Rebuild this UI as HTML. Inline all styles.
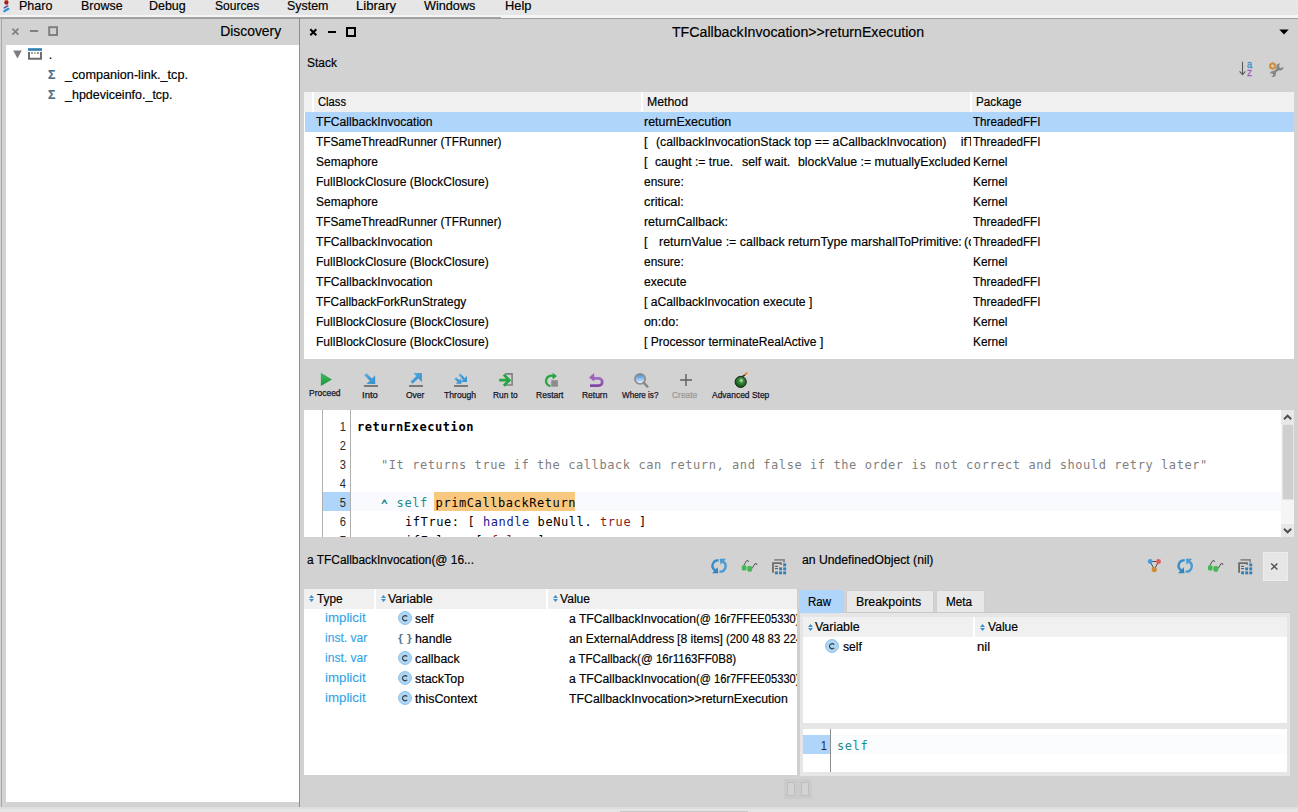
<!DOCTYPE html>
<html><head><meta charset="utf-8"><title>Pharo</title>
<style>
html,body{margin:0;padding:0;}
body{width:1298px;height:812px;overflow:hidden;background:#d2d2d2;position:relative;font-family:'Liberation Sans',sans-serif;font-size:12.5px;color:#000;}
div,span,svg{box-sizing:border-box;}
svg{position:absolute;overflow:visible;}
</style></head><body>
<div style="position:absolute;left:0px;top:0px;width:1298px;height:15px;background:#e6e6e6;"></div><div style="position:absolute;left:0px;top:15px;width:1298px;height:3px;background:#f5f5f5;"></div><div style="position:absolute;left:0px;top:17px;width:501px;height:1px;background:#a4a4a4;"></div><span style="position:absolute;left:18.7px;transform-origin:left center;top:-2.5044999999999993px;line-height:16px;white-space:pre;font-family:'Liberation Sans',sans-serif;font-size:13px;font-weight:normal;color:#000;-webkit-text-stroke:0.18px;transform:scaleX(0.9624);">Pharo</span><span style="position:absolute;left:80.60000000000001px;transform-origin:left center;top:-2.5044999999999993px;line-height:16px;white-space:pre;font-family:'Liberation Sans',sans-serif;font-size:13px;font-weight:normal;color:#000;-webkit-text-stroke:0.18px;transform:scaleX(0.9594);">Browse</span><span style="position:absolute;left:149.39999999999998px;transform-origin:left center;top:-2.5044999999999993px;line-height:16px;white-space:pre;font-family:'Liberation Sans',sans-serif;font-size:13px;font-weight:normal;color:#000;-webkit-text-stroke:0.18px;transform:scaleX(0.9579);">Debug</span><span style="position:absolute;left:214.5px;transform-origin:left center;top:-2.5044999999999993px;line-height:16px;white-space:pre;font-family:'Liberation Sans',sans-serif;font-size:13px;font-weight:normal;color:#000;-webkit-text-stroke:0.18px;transform:scaleX(0.9287);">Sources</span><span style="position:absolute;left:287.2px;transform-origin:left center;top:-2.5044999999999993px;line-height:16px;white-space:pre;font-family:'Liberation Sans',sans-serif;font-size:13px;font-weight:normal;color:#000;-webkit-text-stroke:0.18px;transform:scaleX(0.9552);">System</span><span style="position:absolute;left:356.2px;transform-origin:left center;top:-2.5044999999999993px;line-height:16px;white-space:pre;font-family:'Liberation Sans',sans-serif;font-size:13px;font-weight:normal;color:#000;-webkit-text-stroke:0.18px;transform:scaleX(1.0088);">Library</span><span style="position:absolute;left:424.0px;transform-origin:left center;top:-2.5044999999999993px;line-height:16px;white-space:pre;font-family:'Liberation Sans',sans-serif;font-size:13px;font-weight:normal;color:#000;-webkit-text-stroke:0.18px;transform:scaleX(0.9744);">Windows</span><span style="position:absolute;left:504.5px;transform-origin:left center;top:-2.5044999999999993px;line-height:16px;white-space:pre;font-family:'Liberation Sans',sans-serif;font-size:13px;font-weight:normal;color:#000;-webkit-text-stroke:0.18px;transform:scaleX(0.9869);">Help</span><svg style="left:0px;top:0px" width="14" height="14" viewBox="0 0 14 14"><ellipse cx="6.4" cy="2.4" rx="2.1" ry="2.4" fill="#a51c1c"/><path d="M5.6 0h1.6v1h-1.6z" fill="#e87060"/><path d="M4.4 7.8L7.7 5.9" stroke="#5c5c9c" stroke-width="1.6" stroke-linecap="round"/><path d="M4.3 11.1L8.4 8.8" stroke="#2a90d8" stroke-width="2.2" stroke-linecap="round"/></svg><div style="position:absolute;left:0px;top:18px;width:1298px;height:1px;background:#9e9e9e;"></div><div style="position:absolute;left:1px;top:18px;width:1px;height:789px;background:#a8a8a8;"></div><div style="position:absolute;left:6px;top:45px;width:293px;height:757px;background:#fff;"></div><span style="position:absolute;right:1017.3px;transform-origin:right center;top:20.69855px;line-height:20px;white-space:pre;font-family:'Liberation Sans',sans-serif;font-size:15.3px;font-weight:normal;color:#000;-webkit-text-stroke:0.18px;transform:scaleX(0.9083);">Discovery</span><svg style="left:10px;top:24px" width="60" height="14" viewBox="0 0 60 14"><g stroke="#808080" fill="none"><path d="M2.4 4.6l6 6M8.4 4.6l-6 6" stroke-width="1.7"/><path d="M20 7h8.2" stroke-width="2"/><rect x="39.2" y="3.2" width="7.8" height="7.8" stroke-width="2"/></g></svg><svg style="left:13px;top:50px" width="9" height="9"><path d="M0.2 0.5h8.6l-4.3 8z" fill="#7c7c7c"/></svg><svg style="left:28px;top:48px" width="14" height="12"><rect x="0" y="0.2" width="14" height="2.6" fill="#2f7fb5"/><path d="M1 4v6.8h12V4" fill="none" stroke="#6e6e6e" stroke-width="2"/><rect x="3.2" y="4.3" width="1.6" height="1.5" fill="#2f7fb5"/><rect x="6.1" y="4.3" width="1.7" height="1.5" fill="#d08a30"/><rect x="9" y="4.3" width="1.8" height="1.5" fill="#606060"/></svg><span style="position:absolute;left:48.8px;transform-origin:left center;top:46.66875px;line-height:16px;white-space:pre;font-family:'Liberation Sans',sans-serif;font-size:12.5px;font-weight:normal;color:#000;-webkit-text-stroke:0.18px;">.</span><span style="position:absolute;left:47.6px;transform-origin:left center;top:66.66875px;line-height:16px;white-space:pre;font-family:'Liberation Sans',sans-serif;font-size:12.5px;font-weight:bold;color:#4a6f8a;-webkit-text-stroke:0.18px;transform:scaleX(0.9846);">Σ</span><span style="position:absolute;left:65.2px;transform-origin:left center;top:66.66875px;line-height:16px;white-space:pre;font-family:'Liberation Sans',sans-serif;font-size:12.5px;font-weight:normal;color:#000;-webkit-text-stroke:0.18px;transform:scaleX(1.0114);">_companion-link._tcp.</span><span style="position:absolute;left:47.6px;transform-origin:left center;top:86.66875px;line-height:16px;white-space:pre;font-family:'Liberation Sans',sans-serif;font-size:12.5px;font-weight:bold;color:#4a6f8a;-webkit-text-stroke:0.18px;transform:scaleX(0.9846);">Σ</span><span style="position:absolute;left:65.2px;transform-origin:left center;top:86.66875px;line-height:16px;white-space:pre;font-family:'Liberation Sans',sans-serif;font-size:12.5px;font-weight:normal;color:#000;-webkit-text-stroke:0.18px;transform:scaleX(0.9980);">_hpdeviceinfo._tcp.</span><div style="position:absolute;left:299px;top:18px;width:1px;height:789px;background:#8f8f8f;"></div><svg style="left:308px;top:26px" width="60" height="14" viewBox="0 0 60 14"><g stroke="#000" stroke-width="2" fill="none"><path d="M2.3 3.3l6 6M8.3 3.3l-6 6"/><path d="M20 6h8"/><rect x="39" y="2" width="8" height="8"/></g></svg><span style="position:absolute;left:662.05px;transform-origin:center center;top:21.69855px;line-height:20px;white-space:pre;font-family:'Liberation Sans',sans-serif;font-size:15.3px;font-weight:normal;color:#000;-webkit-text-stroke:0.18px;transform:scaleX(0.9269);">TFCallbackInvocation&gt;&gt;returnExecution</span><svg style="left:1279px;top:29px" width="10" height="6"><path d="M0.3 0.5h9.4l-4.7 5z" fill="#000"/></svg><span style="position:absolute;left:307px;transform-origin:left center;top:54.66875px;line-height:16px;white-space:pre;font-family:'Liberation Sans',sans-serif;font-size:12.5px;font-weight:normal;color:#000;-webkit-text-stroke:0.18px;transform:scaleX(0.9595);">Stack</span><svg style="left:1239px;top:61px" width="14" height="16"><path d="M3.5 0.8v12.6M0.6 10.4l2.9 3.2l2.9-3.2" fill="none" stroke="#5a5a5a" stroke-width="1.1"/></svg><span style="position:absolute;left:1246.7px;transform-origin:left center;top:58.0px;line-height:12px;white-space:pre;font-family:'Liberation Sans',sans-serif;font-size:10.5px;font-weight:normal;color:#3a8fc0;transform:scaleX(0.8898);-webkit-text-stroke:0.3px #3a8fc0;">a</span><span style="position:absolute;left:1246.9px;transform-origin:left center;top:66.3px;line-height:12px;white-space:pre;font-family:'Liberation Sans',sans-serif;font-size:10.5px;font-weight:normal;color:#9a5fc0;transform:scaleX(0.9524);-webkit-text-stroke:0.3px #9a5fc0;">z</span><svg style="left:1268px;top:61px" width="17" height="17" viewBox="0 0 17 17"><path d="M5.2 12.6l5-5" stroke="#868686" stroke-width="2.6"/><path d="M12.2 2.6a3.5 3.5 0 1 0 3.2 3.2l-2.3 1.5l-1.9-1.1l0.1-2.2z" fill="#868686"/><path d="M3.2 15.4a3 3 0 1 0-1.2-2.6l2-0.6l1.3 1.2l-0.6 1.6z" fill="#868686"/><path d="M4.6 1l3.5 2v4l-3.5 2l-3.5-2v-4z" fill="#cb8f45"/><circle cx="4.6" cy="5" r="1.5" fill="#e6cfae"/></svg><div style="position:absolute;left:304px;top:92px;width:990px;height:267px;background:#fff;"></div><div style="position:absolute;left:304px;top:92px;width:8px;height:20px;background:#f0f0f0;"></div><div style="position:absolute;left:314px;top:92px;width:327px;height:20px;background:#f0f0f0;"></div><div style="position:absolute;left:643px;top:92px;width:327px;height:20px;background:#f0f0f0;"></div><div style="position:absolute;left:972px;top:92px;width:322px;height:20px;background:#f0f0f0;"></div><span style="position:absolute;left:318.2px;transform-origin:left center;top:93.66875px;line-height:16px;white-space:pre;font-family:'Liberation Sans',sans-serif;font-size:12.5px;font-weight:normal;color:#000;-webkit-text-stroke:0.18px;transform:scaleX(0.8956);">Class</span><span style="position:absolute;left:647px;transform-origin:left center;top:93.66875px;line-height:16px;white-space:pre;font-family:'Liberation Sans',sans-serif;font-size:12.5px;font-weight:normal;color:#000;-webkit-text-stroke:0.18px;transform:scaleX(0.9831);">Method</span><span style="position:absolute;left:976px;transform-origin:left center;top:93.66875px;line-height:16px;white-space:pre;font-family:'Liberation Sans',sans-serif;font-size:12.5px;font-weight:normal;color:#000;-webkit-text-stroke:0.18px;transform:scaleX(0.9372);">Package</span><div style="position:absolute;left:305px;top:112px;width:989px;height:20px;background:#afd5fa;"></div><span style="position:absolute;left:315.8px;transform-origin:left center;top:113.66875px;line-height:16px;white-space:pre;font-family:'Liberation Sans',sans-serif;font-size:12.5px;font-weight:normal;color:#000;-webkit-text-stroke:0.18px;transform:scaleX(0.9700);">TFCallbackInvocation</span><div style="position:absolute;left:643px;top:112px;width:327.5px;height:20px;overflow:hidden"><span style="position:absolute;left:0.9px;transform-origin:left center;top:1.6687499999999993px;line-height:16px;white-space:pre;font-family:'Liberation Sans',sans-serif;font-size:12.5px;font-weight:normal;color:#000;-webkit-text-stroke:0.18px;transform:scaleX(0.9970);">returnExecution</span></div><span style="position:absolute;left:973.3px;transform-origin:left center;top:113.66875px;line-height:16px;white-space:pre;font-family:'Liberation Sans',sans-serif;font-size:12.5px;font-weight:normal;color:#000;-webkit-text-stroke:0.18px;transform:scaleX(0.9327);">ThreadedFFI</span><span style="position:absolute;left:315.8px;transform-origin:left center;top:133.66875px;line-height:16px;white-space:pre;font-family:'Liberation Sans',sans-serif;font-size:12.5px;font-weight:normal;color:#000;-webkit-text-stroke:0.18px;transform:scaleX(0.9435);">TFSameThreadRunner (TFRunner)</span><div style="position:absolute;left:643px;top:132px;width:327.5px;height:20px;overflow:hidden"><span style="position:absolute;left:1px;transform-origin:left center;top:1.6687499999999993px;line-height:16px;white-space:pre;font-family:'Liberation Sans',sans-serif;font-size:12.5px;font-weight:normal;color:#000;-webkit-text-stroke:0.18px;">[</span><span style="position:absolute;left:13.100000000000023px;transform-origin:left center;top:1.6687499999999993px;line-height:16px;white-space:pre;font-family:'Liberation Sans',sans-serif;font-size:12.5px;font-weight:normal;color:#000;-webkit-text-stroke:0.18px;transform:scaleX(0.9811);">(callbackInvocationStack top == aCallbackInvocation)</span><span style="position:absolute;left:317.79999999999995px;transform-origin:left center;top:1.6687499999999993px;line-height:16px;white-space:pre;font-family:'Liberation Sans',sans-serif;font-size:12.5px;font-weight:normal;color:#000;-webkit-text-stroke:0.18px;">ifTrue: [</span></div><span style="position:absolute;left:973.3px;transform-origin:left center;top:133.66875px;line-height:16px;white-space:pre;font-family:'Liberation Sans',sans-serif;font-size:12.5px;font-weight:normal;color:#000;-webkit-text-stroke:0.18px;transform:scaleX(0.9327);">ThreadedFFI</span><span style="position:absolute;left:315.8px;transform-origin:left center;top:153.66875px;line-height:16px;white-space:pre;font-family:'Liberation Sans',sans-serif;font-size:12.5px;font-weight:normal;color:#000;-webkit-text-stroke:0.18px;transform:scaleX(0.9594);">Semaphore</span><div style="position:absolute;left:643px;top:152px;width:327.5px;height:20px;overflow:hidden"><span style="position:absolute;left:1px;transform-origin:left center;top:1.6687499999999993px;line-height:16px;white-space:pre;font-family:'Liberation Sans',sans-serif;font-size:12.5px;font-weight:normal;color:#000;-webkit-text-stroke:0.18px;">[</span><span style="position:absolute;left:12.399999999999977px;transform-origin:left center;top:1.6687499999999993px;line-height:16px;white-space:pre;font-family:'Liberation Sans',sans-serif;font-size:12.5px;font-weight:normal;color:#000;-webkit-text-stroke:0.18px;transform:scaleX(0.9743);">caught := true.</span><span style="position:absolute;left:98.60000000000002px;transform-origin:left center;top:1.6687499999999993px;line-height:16px;white-space:pre;font-family:'Liberation Sans',sans-serif;font-size:12.5px;font-weight:normal;color:#000;-webkit-text-stroke:0.18px;transform:scaleX(0.9930);">self wait.</span><span style="position:absolute;left:154.70000000000005px;transform-origin:left center;top:1.6687499999999993px;line-height:16px;white-space:pre;font-family:'Liberation Sans',sans-serif;font-size:12.5px;font-weight:normal;color:#000;-webkit-text-stroke:0.18px;transform:scaleX(0.9817);">blockValue := mutuallyExcludedBlock value</span></div><span style="position:absolute;left:973.3px;transform-origin:left center;top:153.66875px;line-height:16px;white-space:pre;font-family:'Liberation Sans',sans-serif;font-size:12.5px;font-weight:normal;color:#000;-webkit-text-stroke:0.18px;transform:scaleX(0.9518);">Kernel</span><span style="position:absolute;left:315.8px;transform-origin:left center;top:173.66875px;line-height:16px;white-space:pre;font-family:'Liberation Sans',sans-serif;font-size:12.5px;font-weight:normal;color:#000;-webkit-text-stroke:0.18px;transform:scaleX(0.9642);">FullBlockClosure (BlockClosure)</span><div style="position:absolute;left:643px;top:172px;width:327.5px;height:20px;overflow:hidden"><span style="position:absolute;left:0.9px;transform-origin:left center;top:1.6687499999999993px;line-height:16px;white-space:pre;font-family:'Liberation Sans',sans-serif;font-size:12.5px;font-weight:normal;color:#000;-webkit-text-stroke:0.18px;transform:scaleX(0.9544);">ensure:</span></div><span style="position:absolute;left:973.3px;transform-origin:left center;top:173.66875px;line-height:16px;white-space:pre;font-family:'Liberation Sans',sans-serif;font-size:12.5px;font-weight:normal;color:#000;-webkit-text-stroke:0.18px;transform:scaleX(0.9518);">Kernel</span><span style="position:absolute;left:315.8px;transform-origin:left center;top:193.66875px;line-height:16px;white-space:pre;font-family:'Liberation Sans',sans-serif;font-size:12.5px;font-weight:normal;color:#000;-webkit-text-stroke:0.18px;transform:scaleX(0.9594);">Semaphore</span><div style="position:absolute;left:643px;top:192px;width:327.5px;height:20px;overflow:hidden"><span style="position:absolute;left:0.9px;transform-origin:left center;top:1.6687499999999993px;line-height:16px;white-space:pre;font-family:'Liberation Sans',sans-serif;font-size:12.5px;font-weight:normal;color:#000;-webkit-text-stroke:0.18px;transform:scaleX(1.0230);">critical:</span></div><span style="position:absolute;left:973.3px;transform-origin:left center;top:193.66875px;line-height:16px;white-space:pre;font-family:'Liberation Sans',sans-serif;font-size:12.5px;font-weight:normal;color:#000;-webkit-text-stroke:0.18px;transform:scaleX(0.9518);">Kernel</span><span style="position:absolute;left:315.8px;transform-origin:left center;top:213.66875px;line-height:16px;white-space:pre;font-family:'Liberation Sans',sans-serif;font-size:12.5px;font-weight:normal;color:#000;-webkit-text-stroke:0.18px;transform:scaleX(0.9435);">TFSameThreadRunner (TFRunner)</span><div style="position:absolute;left:643px;top:212px;width:327.5px;height:20px;overflow:hidden"><span style="position:absolute;left:0.9px;transform-origin:left center;top:1.6687499999999993px;line-height:16px;white-space:pre;font-family:'Liberation Sans',sans-serif;font-size:12.5px;font-weight:normal;color:#000;-webkit-text-stroke:0.18px;">returnCallback:</span></div><span style="position:absolute;left:973.3px;transform-origin:left center;top:213.66875px;line-height:16px;white-space:pre;font-family:'Liberation Sans',sans-serif;font-size:12.5px;font-weight:normal;color:#000;-webkit-text-stroke:0.18px;transform:scaleX(0.9327);">ThreadedFFI</span><span style="position:absolute;left:315.8px;transform-origin:left center;top:233.66875px;line-height:16px;white-space:pre;font-family:'Liberation Sans',sans-serif;font-size:12.5px;font-weight:normal;color:#000;-webkit-text-stroke:0.18px;transform:scaleX(0.9700);">TFCallbackInvocation</span><div style="position:absolute;left:643px;top:232px;width:327.5px;height:20px;overflow:hidden"><span style="position:absolute;left:1px;transform-origin:left center;top:1.6687499999999993px;line-height:16px;white-space:pre;font-family:'Liberation Sans',sans-serif;font-size:12.5px;font-weight:normal;color:#000;-webkit-text-stroke:0.18px;">[</span><span style="position:absolute;left:15.600000000000023px;transform-origin:left center;top:1.6687499999999993px;line-height:16px;white-space:pre;font-family:'Liberation Sans',sans-serif;font-size:12.5px;font-weight:normal;color:#000;-webkit-text-stroke:0.18px;transform:scaleX(0.9924);">returnValue := callback returnType marshallToPrimitive:</span><span style="position:absolute;left:321.1px;transform-origin:left center;top:1.6687499999999993px;line-height:16px;white-space:pre;font-family:'Liberation Sans',sans-serif;font-size:12.5px;font-weight:normal;color:#000;-webkit-text-stroke:0.18px;">(callback</span></div><span style="position:absolute;left:973.3px;transform-origin:left center;top:233.66875px;line-height:16px;white-space:pre;font-family:'Liberation Sans',sans-serif;font-size:12.5px;font-weight:normal;color:#000;-webkit-text-stroke:0.18px;transform:scaleX(0.9327);">ThreadedFFI</span><span style="position:absolute;left:315.8px;transform-origin:left center;top:253.66875px;line-height:16px;white-space:pre;font-family:'Liberation Sans',sans-serif;font-size:12.5px;font-weight:normal;color:#000;-webkit-text-stroke:0.18px;transform:scaleX(0.9642);">FullBlockClosure (BlockClosure)</span><div style="position:absolute;left:643px;top:252px;width:327.5px;height:20px;overflow:hidden"><span style="position:absolute;left:0.9px;transform-origin:left center;top:1.6687499999999993px;line-height:16px;white-space:pre;font-family:'Liberation Sans',sans-serif;font-size:12.5px;font-weight:normal;color:#000;-webkit-text-stroke:0.18px;transform:scaleX(0.9544);">ensure:</span></div><span style="position:absolute;left:973.3px;transform-origin:left center;top:253.66875px;line-height:16px;white-space:pre;font-family:'Liberation Sans',sans-serif;font-size:12.5px;font-weight:normal;color:#000;-webkit-text-stroke:0.18px;transform:scaleX(0.9518);">Kernel</span><span style="position:absolute;left:315.8px;transform-origin:left center;top:273.66875px;line-height:16px;white-space:pre;font-family:'Liberation Sans',sans-serif;font-size:12.5px;font-weight:normal;color:#000;-webkit-text-stroke:0.18px;transform:scaleX(0.9700);">TFCallbackInvocation</span><div style="position:absolute;left:643px;top:272px;width:327.5px;height:20px;overflow:hidden"><span style="position:absolute;left:0.9px;transform-origin:left center;top:1.6687499999999993px;line-height:16px;white-space:pre;font-family:'Liberation Sans',sans-serif;font-size:12.5px;font-weight:normal;color:#000;-webkit-text-stroke:0.18px;transform:scaleX(0.9685);">execute</span></div><span style="position:absolute;left:973.3px;transform-origin:left center;top:273.66875px;line-height:16px;white-space:pre;font-family:'Liberation Sans',sans-serif;font-size:12.5px;font-weight:normal;color:#000;-webkit-text-stroke:0.18px;transform:scaleX(0.9327);">ThreadedFFI</span><span style="position:absolute;left:315.8px;transform-origin:left center;top:293.66875px;line-height:16px;white-space:pre;font-family:'Liberation Sans',sans-serif;font-size:12.5px;font-weight:normal;color:#000;-webkit-text-stroke:0.18px;transform:scaleX(0.9531);">TFCallbackForkRunStrategy</span><div style="position:absolute;left:643px;top:292px;width:327.5px;height:20px;overflow:hidden"><span style="position:absolute;left:0.9px;transform-origin:left center;top:1.6687499999999993px;line-height:16px;white-space:pre;font-family:'Liberation Sans',sans-serif;font-size:12.5px;font-weight:normal;color:#000;-webkit-text-stroke:0.18px;transform:scaleX(0.9732);">[ aCallbackInvocation execute ]</span></div><span style="position:absolute;left:973.3px;transform-origin:left center;top:293.66875px;line-height:16px;white-space:pre;font-family:'Liberation Sans',sans-serif;font-size:12.5px;font-weight:normal;color:#000;-webkit-text-stroke:0.18px;transform:scaleX(0.9327);">ThreadedFFI</span><span style="position:absolute;left:315.8px;transform-origin:left center;top:313.66875px;line-height:16px;white-space:pre;font-family:'Liberation Sans',sans-serif;font-size:12.5px;font-weight:normal;color:#000;-webkit-text-stroke:0.18px;transform:scaleX(0.9642);">FullBlockClosure (BlockClosure)</span><div style="position:absolute;left:643px;top:312px;width:327.5px;height:20px;overflow:hidden"><span style="position:absolute;left:0.9px;transform-origin:left center;top:1.6687499999999993px;line-height:16px;white-space:pre;font-family:'Liberation Sans',sans-serif;font-size:12.5px;font-weight:normal;color:#000;-webkit-text-stroke:0.18px;">on:do:</span></div><span style="position:absolute;left:973.3px;transform-origin:left center;top:313.66875px;line-height:16px;white-space:pre;font-family:'Liberation Sans',sans-serif;font-size:12.5px;font-weight:normal;color:#000;-webkit-text-stroke:0.18px;transform:scaleX(0.9518);">Kernel</span><span style="position:absolute;left:315.8px;transform-origin:left center;top:333.66875px;line-height:16px;white-space:pre;font-family:'Liberation Sans',sans-serif;font-size:12.5px;font-weight:normal;color:#000;-webkit-text-stroke:0.18px;transform:scaleX(0.9642);">FullBlockClosure (BlockClosure)</span><div style="position:absolute;left:643px;top:332px;width:327.5px;height:20px;overflow:hidden"><span style="position:absolute;left:0.9px;transform-origin:left center;top:1.6687499999999993px;line-height:16px;white-space:pre;font-family:'Liberation Sans',sans-serif;font-size:12.5px;font-weight:normal;color:#000;-webkit-text-stroke:0.18px;transform:scaleX(0.9666);">[ Processor terminateRealActive ]</span></div><span style="position:absolute;left:973.3px;transform-origin:left center;top:333.66875px;line-height:16px;white-space:pre;font-family:'Liberation Sans',sans-serif;font-size:12.5px;font-weight:normal;color:#000;-webkit-text-stroke:0.18px;transform:scaleX(0.9518);">Kernel</span><span style="position:absolute;left:308.8px;transform-origin:left center;top:387.3815px;line-height:12px;white-space:pre;font-family:'Liberation Sans',sans-serif;font-size:9px;font-weight:normal;color:#15152a;transform:scaleX(0.9424);-webkit-text-stroke:0.25px currentColor;">Proceed</span><span style="position:absolute;left:361.8px;transform-origin:left center;top:389.3815px;line-height:12px;white-space:pre;font-family:'Liberation Sans',sans-serif;font-size:9px;font-weight:normal;color:#15152a;transform:scaleX(1.0522);-webkit-text-stroke:0.25px currentColor;">Into</span><span style="position:absolute;left:405.8px;transform-origin:left center;top:389.3815px;line-height:12px;white-space:pre;font-family:'Liberation Sans',sans-serif;font-size:9px;font-weight:normal;color:#15152a;transform:scaleX(0.9428);-webkit-text-stroke:0.25px currentColor;">Over</span><span style="position:absolute;left:444.20000000000005px;transform-origin:left center;top:389.3815px;line-height:12px;white-space:pre;font-family:'Liberation Sans',sans-serif;font-size:9px;font-weight:normal;color:#15152a;transform:scaleX(0.9573);-webkit-text-stroke:0.25px currentColor;">Through</span><span style="position:absolute;left:492.90000000000003px;transform-origin:left center;top:389.3815px;line-height:12px;white-space:pre;font-family:'Liberation Sans',sans-serif;font-size:9px;font-weight:normal;color:#15152a;transform:scaleX(0.9347);-webkit-text-stroke:0.25px currentColor;">Run to</span><span style="position:absolute;left:536.0px;transform-origin:left center;top:389.3815px;line-height:12px;white-space:pre;font-family:'Liberation Sans',sans-serif;font-size:9px;font-weight:normal;color:#15152a;transform:scaleX(0.9478);-webkit-text-stroke:0.25px currentColor;">Restart</span><span style="position:absolute;left:582.1px;transform-origin:left center;top:389.3815px;line-height:12px;white-space:pre;font-family:'Liberation Sans',sans-serif;font-size:9px;font-weight:normal;color:#15152a;transform:scaleX(0.9402);-webkit-text-stroke:0.25px currentColor;">Return</span><span style="position:absolute;left:621.8000000000001px;transform-origin:left center;top:389.3815px;line-height:12px;white-space:pre;font-family:'Liberation Sans',sans-serif;font-size:9px;font-weight:normal;color:#15152a;transform:scaleX(0.8984);-webkit-text-stroke:0.25px currentColor;">Where is?</span><span style="position:absolute;left:671.8000000000001px;transform-origin:left center;top:389.3815px;line-height:12px;white-space:pre;font-family:'Liberation Sans',sans-serif;font-size:9px;font-weight:normal;color:#9a9a9a;transform:scaleX(0.9365);-webkit-text-stroke:0.25px currentColor;">Create</span><span style="position:absolute;left:711.5px;transform-origin:left center;top:389.3815px;line-height:12px;white-space:pre;font-family:'Liberation Sans',sans-serif;font-size:9px;font-weight:normal;color:#15152a;transform:scaleX(0.9386);-webkit-text-stroke:0.25px currentColor;">Advanced Step</span><svg style="left:0;top:0" width="1298" height="812" viewBox="0 0 1298 812"><defs><linearGradient id="gG" x1="0" y1="0" x2="0" y2="1"><stop offset="0" stop-color="#3dba5e"/><stop offset="1" stop-color="#1f9639"/></linearGradient><linearGradient id="gB" x1="0" y1="0" x2="1" y2="1"><stop offset="0" stop-color="#5aaee0"/><stop offset="1" stop-color="#2f8ccc"/></linearGradient><linearGradient id="gM" x1="0" y1="0" x2="0" y2="1"><stop offset="0" stop-color="#3a8fd6"/><stop offset="1" stop-color="#e8f2fa"/></linearGradient><radialGradient id="gBomb" cx="0.55" cy="0.38" r="0.6"><stop offset="0" stop-color="#d8ecd8"/><stop offset="0.35" stop-color="#3d8a3d"/><stop offset="1" stop-color="#0f4f12"/></radialGradient><linearGradient id="gP" x1="0" y1="0" x2="0" y2="1"><stop offset="0" stop-color="#a06cc0"/><stop offset="1" stop-color="#8445a8"/></linearGradient></defs><path d="M320.9 372.8L332 379.4L320.9 386z" fill="url(#gG)"/><path d="M365.3 374.3L371.24 380.04" stroke="url(#gB)" stroke-width="2.9" fill="none"/><path d="M375.2 375.2L375.2 384L366.4 384z" fill="url(#gB)"/><rect x="363.9" y="385" width="14.1" height="2" fill="#7a7a7a"/><path d="M411.6 382.6L418.2 376.4" stroke="url(#gB)" stroke-width="2.9" fill="none"/><path d="M413.3 373.1L421.9 373.1L421.9 381.9z" fill="url(#gB)"/><rect x="409" y="385" width="14" height="2" fill="#7a7a7a"/><path d="M459.6 374.2L464.21 379.21" stroke="url(#gB)" stroke-width="2.4" fill="none"/><path d="M467 375.8L467 382L460.8 382z" fill="url(#gB)"/><path d="M455.2 378.2L458.78000000000003 381.28000000000003" stroke="url(#gB)" stroke-width="2.4" fill="none"/><path d="M461.3 378.2L461.3 383.8L455.7 383.8z" fill="url(#gB)"/><rect x="454" y="385" width="14" height="2" fill="#7a7a7a"/><path d="M505.2 373.9H512.1V385H505.2" fill="none" stroke="#808080" stroke-width="1.6"/><path d="M499.2 380.2H508.6M503.8 374.6L509.4 380.2L503.8 385.8" fill="none" stroke="#27a545" stroke-width="2.7" stroke-linejoin="miter"/><path d="M553.6 376.2A5.3 5.3 0 1 0 550.4 386.2" fill="none" stroke="#27a545" stroke-width="2.3"/><path d="M552.6 372.8L557 376L552.6 379.4z" fill="#27a545"/><rect x="551.2" y="380.2" width="6.7" height="6.5" fill="#8c8c8c"/><path d="M593.5 378.3H598.6A3.6 3.6 0 0 1 598.6 385.6H590" fill="none" stroke="url(#gP)" stroke-width="2.7"/><path d="M589 377.4L594.2 373.1V381.6z" fill="#9a62bc"/><circle cx="640.1" cy="378.9" r="4.4" fill="url(#gM)"/><circle cx="640.1" cy="378.9" r="5.1" fill="none" stroke="#8a8a8a" stroke-width="1.7"/><path d="M643.9 382.9L647.4 386.6" stroke="#8a8a8a" stroke-width="2.6" stroke-linecap="round"/><path d="M680.1 380H692M686 374V386" stroke="#5e5e5e" stroke-width="1.4" fill="none"/><circle cx="740.7" cy="381.9" r="5.6" fill="url(#gBomb)" stroke="#0a1a0a" stroke-width="0.9"/><path d="M742.4 376.6L745 374.8" stroke="#3a2a1a" stroke-width="1.6"/><path d="M744.6 374.9L747.3 372.6" stroke="#e8761a" stroke-width="1.5"/><path d="M746 371.6l1.2 1.4l1 -1.2" stroke="#f0b070" stroke-width="0.6" fill="none"/></svg><svg style="left:0;top:0" width="1298" height="812" viewBox="0 0 1298 812"><g fill="none" stroke-width="2.4"><path d="M718.65 560.4499999999999A5.35 5.35 0 0 0 715.15 570.35" stroke="#3b8dc8"/><path d="M719.4499999999999 571.5500000000001A5.35 5.35 0 0 0 722.9499999999999 561.65" stroke="#4a9bd4"/></g><path d="M712.0 573.1999999999999L718.3 573.1999999999999L717.6 567.1999999999999z" fill="#3383bd"/><path d="M726.1 558.8L719.8 558.8L720.5 564.8z" fill="#4a9bd4"/><g fill="none" stroke="#454545" stroke-width="0.9"><path d="M743.8 565.4L746.4 560.9Q748.0999999999999 559.4 748.6999999999999 562.0"/><path d="M752.1999999999999 568.4L754.8 563.8Q756.5 562.4 757.0 565.0"/></g><rect x="741.8" y="565.1999999999999" width="4.7" height="5.4" rx="1.6" fill="#44b854"/><rect x="747.3" y="566.0" width="4.8" height="5.7" rx="1.6" fill="#44b854"/><path d="M774.3000000000001 559.9H784.0V562.4" fill="none" stroke="#8a8a8a" stroke-width="1.8"/><path d="M773.0 572.8V563.1999999999999H780.9V564.8" fill="none" stroke="#6c6c6c" stroke-width="1.8"/><path d="M775.0 566.3h2.9M775.0 568.5999999999999h2.9" stroke="#3a3a3a" stroke-width="0.9"/><rect x="783.2" y="563.4" width="2.9" height="2.9" fill="#2f80b8"/><rect x="779.1" y="567.4" width="2.9" height="2.9" fill="#2f80b8"/><rect x="783.2" y="567.4" width="2.9" height="2.9" fill="#2f80b8"/><rect x="775.0" y="571.4" width="2.9" height="2.9" fill="#2f80b8"/><rect x="779.1" y="571.4" width="2.9" height="2.9" fill="#2f80b8"/><rect x="783.2" y="571.4" width="2.9" height="2.9" fill="#2f80b8"/><g fill="none" stroke-width="2.4"><path d="M1184.75 560.4499999999999A5.35 5.35 0 0 0 1181.25 570.35" stroke="#3b8dc8"/><path d="M1185.5500000000002 571.5500000000001A5.35 5.35 0 0 0 1189.0500000000002 561.65" stroke="#4a9bd4"/></g><path d="M1178.1 573.1999999999999L1184.4 573.1999999999999L1183.7 567.1999999999999z" fill="#3383bd"/><path d="M1192.2 558.8L1185.9 558.8L1186.6 564.8z" fill="#4a9bd4"/><g fill="none" stroke="#454545" stroke-width="0.9"><path d="M1209.9 565.4L1212.5 560.9Q1214.2 559.4 1214.8000000000002 562.0"/><path d="M1218.3000000000002 568.4L1220.9 563.8Q1222.6000000000001 562.4 1223.1000000000001 565.0"/></g><rect x="1207.9" y="565.1999999999999" width="4.7" height="5.4" rx="1.6" fill="#44b854"/><rect x="1213.4" y="566.0" width="4.8" height="5.7" rx="1.6" fill="#44b854"/><path d="M1240.4 559.9H1250.1000000000001V562.4" fill="none" stroke="#8a8a8a" stroke-width="1.8"/><path d="M1239.1000000000001 572.8V563.1999999999999H1247.0V564.8" fill="none" stroke="#6c6c6c" stroke-width="1.8"/><path d="M1241.1000000000001 566.3h2.9M1241.1000000000001 568.5999999999999h2.9" stroke="#3a3a3a" stroke-width="0.9"/><rect x="1249.3" y="563.4" width="2.9" height="2.9" fill="#2f80b8"/><rect x="1245.2" y="567.4" width="2.9" height="2.9" fill="#2f80b8"/><rect x="1249.3" y="567.4" width="2.9" height="2.9" fill="#2f80b8"/><rect x="1241.1000000000001" y="571.4" width="2.9" height="2.9" fill="#2f80b8"/><rect x="1245.2" y="571.4" width="2.9" height="2.9" fill="#2f80b8"/><rect x="1249.3" y="571.4" width="2.9" height="2.9" fill="#2f80b8"/><path d="M1150.2 561.5H1158.5L1154.3 569.6z" fill="none" stroke="#3a3a3a" stroke-width="0.9"/><circle cx="1150.2" cy="561.5" r="2.4" fill="#4a9ad8"/><circle cx="1158.5" cy="561.5" r="2.4" fill="#e05a5a"/><circle cx="1154.3" cy="569.6" r="2.6" fill="#d08a3a"/></svg><div style="position:absolute;left:304px;top:410px;width:990px;height:127px;background:#fff;"></div><div style="position:absolute;left:322px;top:410px;width:1px;height:127px;background:#b0b0b0;"></div><div style="position:absolute;left:350px;top:410px;width:1px;height:127px;background:#b0b0b0;"></div><div style="position:absolute;left:323px;top:492px;width:27px;height:19px;background:#afd5fa;"></div><div style="position:absolute;left:351px;top:492px;width:930px;height:19px;background:#f8fafd;"></div><div style="position:absolute;left:1281px;top:410px;width:13px;height:127px;background:#f5f5f5;"></div><div style="position:absolute;left:1281px;top:410px;width:13px;height:13.5px;background:#e8e8e8;"></div><div style="position:absolute;left:1281px;top:524px;width:13px;height:13px;background:#e8e8e8;"></div><div style="position:absolute;left:1281.5px;top:423.5px;width:12px;height:76.5px;background:#cfcfcf;border:1px solid #e4e4e4;"></div><svg style="left:1283px;top:413px" width="9" height="8"><path d="M1 6.3l3.6-3.6l3.6 3.6" fill="none" stroke="#505050" stroke-width="2"/></svg><svg style="left:1283px;top:527px" width="9" height="8"><path d="M1 1.7l3.6 3.6l3.6-3.6" fill="none" stroke="#505050" stroke-width="2"/></svg><div style="position:absolute;left:304px;top:410px;width:977px;height:127px;overflow:hidden"><span style="position:absolute;right:934.7px;transform-origin:right center;top:8.66875px;line-height:16px;white-space:pre;font-family:'Liberation Sans',sans-serif;font-size:12.5px;font-weight:normal;color:#2a2a2a;transform:scaleX(0.8917);-webkit-text-stroke:0;">1</span><span style="position:absolute;right:934.7px;transform-origin:right center;top:27.668750000000003px;line-height:16px;white-space:pre;font-family:'Liberation Sans',sans-serif;font-size:12.5px;font-weight:normal;color:#2a2a2a;transform:scaleX(0.8917);-webkit-text-stroke:0;">2</span><span style="position:absolute;right:934.7px;transform-origin:right center;top:46.66875px;line-height:16px;white-space:pre;font-family:'Liberation Sans',sans-serif;font-size:12.5px;font-weight:normal;color:#2a2a2a;transform:scaleX(0.8917);-webkit-text-stroke:0;">3</span><span style="position:absolute;right:934.7px;transform-origin:right center;top:65.66875px;line-height:16px;white-space:pre;font-family:'Liberation Sans',sans-serif;font-size:12.5px;font-weight:normal;color:#2a2a2a;transform:scaleX(0.8917);-webkit-text-stroke:0;">4</span><span style="position:absolute;right:934.7px;transform-origin:right center;top:84.66875px;line-height:16px;white-space:pre;font-family:'Liberation Sans',sans-serif;font-size:12.5px;font-weight:normal;color:#2a2a2a;transform:scaleX(0.8917);-webkit-text-stroke:0;">5</span><span style="position:absolute;right:934.7px;transform-origin:right center;top:103.66875px;line-height:16px;white-space:pre;font-family:'Liberation Sans',sans-serif;font-size:12.5px;font-weight:normal;color:#2a2a2a;transform:scaleX(0.8917);-webkit-text-stroke:0;">6</span><span style="position:absolute;right:934.7px;transform-origin:right center;top:122.66874999999999px;line-height:16px;white-space:pre;font-family:'Liberation Sans',sans-serif;font-size:12.5px;font-weight:normal;color:#2a2a2a;transform:scaleX(0.8917);-webkit-text-stroke:0;">7</span><span style="position:absolute;left:53px;transform-origin:left center;top:7.847999999999999px;line-height:18px;white-space:pre;font-family:'DejaVu Sans Mono','Liberation Mono',monospace;letter-spacing:0.576px;font-size:12px;font-weight:bold;color:#000;">returnExecution</span><span style="position:absolute;left:77px;transform-origin:left center;top:45.848px;line-height:18px;white-space:pre;font-family:'DejaVu Sans Mono','Liberation Mono',monospace;letter-spacing:0.576px;font-size:12px;font-weight:normal;color:#7f7f7f;">"It returns true if the callback can return, and false if the order is not correct and should retry later"</span><span style="position:absolute;left:77px;transform-origin:left center;top:83.848px;line-height:18px;white-space:pre;font-family:'DejaVu Sans Mono','Liberation Mono',monospace;letter-spacing:0.576px;font-size:12px;font-weight:bold;color:#1f8c8c;"></span><span style="position:absolute;left:92.60000000000002px;transform-origin:left center;top:83.848px;line-height:18px;white-space:pre;font-family:'DejaVu Sans Mono','Liberation Mono',monospace;letter-spacing:0.576px;font-size:12px;font-weight:normal;color:#1f8c8c;">self</span><div style="position:absolute;left:130.00000000000003px;top:82px;width:140.6px;height:19px;background:#f9c880;"></div><span style="position:absolute;left:131.60000000000002px;transform-origin:left center;top:83.848px;line-height:18px;white-space:pre;font-family:'DejaVu Sans Mono','Liberation Mono',monospace;letter-spacing:0.576px;font-size:12px;font-weight:normal;color:#000;">primCallbackReturn</span><span style="position:absolute;left:77px;transform-origin:left center;top:87.302px;line-height:18px;white-space:pre;font-family:'DejaVu Sans Mono','Liberation Mono',monospace;letter-spacing:0.576px;font-size:13px;font-weight:bold;color:#1f8c8c;transform:scale(0.86,1.25);transform-origin:left center;">^</span><span style="position:absolute;left:101px;transform-origin:left center;top:102.848px;line-height:18px;white-space:pre;font-family:'DejaVu Sans Mono','Liberation Mono',monospace;letter-spacing:0.576px;font-size:12px;font-weight:normal;color:#000;">ifTrue: [</span><span style="position:absolute;left:179.0px;transform-origin:left center;top:102.848px;line-height:18px;white-space:pre;font-family:'DejaVu Sans Mono','Liberation Mono',monospace;letter-spacing:0.576px;font-size:12px;font-weight:normal;color:#1a1a90;">handle</span><span style="position:absolute;left:233.60000000000002px;transform-origin:left center;top:102.848px;line-height:18px;white-space:pre;font-family:'DejaVu Sans Mono','Liberation Mono',monospace;letter-spacing:0.576px;font-size:12px;font-weight:normal;color:#000;">beNull.</span><span style="position:absolute;left:296.0px;transform-origin:left center;top:102.848px;line-height:18px;white-space:pre;font-family:'DejaVu Sans Mono','Liberation Mono',monospace;letter-spacing:0.576px;font-size:12px;font-weight:normal;color:#8b1c1c;">true</span><span style="position:absolute;left:335.0px;transform-origin:left center;top:102.848px;line-height:18px;white-space:pre;font-family:'DejaVu Sans Mono','Liberation Mono',monospace;letter-spacing:0.576px;font-size:12px;font-weight:normal;color:#000;">]</span><span style="position:absolute;left:101px;transform-origin:left center;top:121.84800000000001px;line-height:18px;white-space:pre;font-family:'DejaVu Sans Mono','Liberation Mono',monospace;letter-spacing:0.576px;font-size:12px;font-weight:normal;color:#000;">ifFalse: [</span><span style="position:absolute;left:186.8px;transform-origin:left center;top:121.84800000000001px;line-height:18px;white-space:pre;font-family:'DejaVu Sans Mono','Liberation Mono',monospace;letter-spacing:0.576px;font-size:12px;font-weight:normal;color:#8b1c1c;">false</span><span style="position:absolute;left:233.60000000000002px;transform-origin:left center;top:121.84800000000001px;line-height:18px;white-space:pre;font-family:'DejaVu Sans Mono','Liberation Mono',monospace;letter-spacing:0.576px;font-size:12px;font-weight:normal;color:#000;">]</span></div><span style="position:absolute;left:307px;transform-origin:left center;top:551.96875px;line-height:16px;white-space:pre;font-family:'Liberation Sans',sans-serif;font-size:12.5px;font-weight:normal;color:#000;-webkit-text-stroke:0.18px;transform:scaleX(0.9540);">a TFCallbackInvocation(@ 16...</span><div style="position:absolute;left:304px;top:589px;width:493px;height:186px;background:#fff;"></div><div style="position:absolute;left:304px;top:589px;width:70px;height:20px;background:#f0f0f0;"></div><div style="position:absolute;left:376px;top:589px;width:170px;height:20px;background:#f0f0f0;"></div><div style="position:absolute;left:548px;top:589px;width:249px;height:20px;background:#f0f0f0;"></div><svg style="left:308.5px;top:595.2px" width="5" height="7"><path d="M0 3L2.5 0L5 3zM0 4L2.5 7L5 4z" fill="#3f8fcf"/></svg><svg style="left:380.5px;top:595.2px" width="5" height="7"><path d="M0 3L2.5 0L5 3zM0 4L2.5 7L5 4z" fill="#3f8fcf"/></svg><svg style="left:552.5px;top:595.2px" width="5" height="7"><path d="M0 3L2.5 0L5 3zM0 4L2.5 7L5 4z" fill="#3f8fcf"/></svg><span style="position:absolute;left:316.7px;transform-origin:left center;top:590.66875px;line-height:16px;white-space:pre;font-family:'Liberation Sans',sans-serif;font-size:12.5px;font-weight:normal;color:#000;-webkit-text-stroke:0.18px;transform:scaleX(0.9443);">Type</span><span style="position:absolute;left:387.7px;transform-origin:left center;top:590.66875px;line-height:16px;white-space:pre;font-family:'Liberation Sans',sans-serif;font-size:12.5px;font-weight:normal;color:#000;-webkit-text-stroke:0.18px;transform:scaleX(0.9947);">Variable</span><span style="position:absolute;left:559.6px;transform-origin:left center;top:590.66875px;line-height:16px;white-space:pre;font-family:'Liberation Sans',sans-serif;font-size:12.5px;font-weight:normal;color:#000;-webkit-text-stroke:0.18px;transform:scaleX(0.9663);">Value</span><span style="position:absolute;left:325.2px;transform-origin:left center;top:609.66875px;line-height:16px;white-space:pre;font-family:'Liberation Sans',sans-serif;font-size:12.5px;font-weight:normal;color:#2ea4e8;transform:scaleX(1.0627);-webkit-text-stroke:0.1px #2ea4e8;">implicit</span><svg style="left:398px;top:611px" width="14" height="14"><circle cx="7" cy="7" r="6.4" fill="#aed6f5" stroke="#86c0ec" stroke-width="1"/><path d="M9.2 5.5A2.7 2.5 0 1 0 9.2 8.9" fill="none" stroke="#3a3a3a" stroke-width="1.15"/></svg><span style="position:absolute;left:415.4px;transform-origin:left center;top:610.66875px;line-height:16px;white-space:pre;font-family:'Liberation Sans',sans-serif;font-size:12.5px;font-weight:normal;color:#000;-webkit-text-stroke:0.18px;transform:scaleX(0.9561);">self</span><div style="position:absolute;left:548px;top:609px;width:248.5px;height:20px;overflow:hidden"><span style="position:absolute;left:20.600000000000023px;transform-origin:left center;top:1.6687499999999993px;line-height:16px;white-space:pre;font-family:'Liberation Sans',sans-serif;font-size:12.5px;font-weight:normal;color:#000;-webkit-text-stroke:0.18px;transform:scaleX(0.9740);">a TFCallbackInvocation</span><span style="position:absolute;left:148.0px;transform-origin:left center;top:1.6687499999999993px;line-height:16px;white-space:pre;font-family:'Liberation Sans',sans-serif;font-size:12.5px;font-weight:normal;color:#000;-webkit-text-stroke:0.18px;transform:scaleX(0.8778);">(@</span><span style="position:absolute;left:166.0px;transform-origin:left center;top:1.6687499999999993px;line-height:16px;white-space:pre;font-family:'Liberation Sans',sans-serif;font-size:12.5px;font-weight:normal;color:#000;-webkit-text-stroke:0.18px;transform:scaleX(0.8917);">16r7FFEE05330)</span></div><span style="position:absolute;left:325.2px;transform-origin:left center;top:629.66875px;line-height:16px;white-space:pre;font-family:'Liberation Sans',sans-serif;font-size:12.5px;font-weight:normal;color:#2ea4e8;transform:scaleX(0.9642);-webkit-text-stroke:0.1px #2ea4e8;">inst. var</span><span style="position:absolute;left:398px;transform-origin:left center;top:630.2152500000001px;line-height:16px;white-space:pre;font-family:'Liberation Sans',sans-serif;font-size:11.5px;font-weight:normal;color:#4a6a80;-webkit-text-stroke:0.18px;transform:scaleX(1.2671);">{ }</span><span style="position:absolute;left:415.4px;transform-origin:left center;top:630.66875px;line-height:16px;white-space:pre;font-family:'Liberation Sans',sans-serif;font-size:12.5px;font-weight:normal;color:#000;-webkit-text-stroke:0.18px;transform:scaleX(0.9828);">handle</span><div style="position:absolute;left:548px;top:629px;width:248.5px;height:20px;overflow:hidden"><span style="position:absolute;left:20.600000000000023px;transform-origin:left center;top:1.6687499999999993px;line-height:16px;white-space:pre;font-family:'Liberation Sans',sans-serif;font-size:12.5px;font-weight:normal;color:#000;-webkit-text-stroke:0.18px;transform:scaleX(0.9661);">an ExternalAddress</span><span style="position:absolute;left:128.79999999999995px;transform-origin:left center;top:1.6687499999999993px;line-height:16px;white-space:pre;font-family:'Liberation Sans',sans-serif;font-size:12.5px;font-weight:normal;color:#000;-webkit-text-stroke:0.18px;transform:scaleX(0.9735);">[8 items]</span><span style="position:absolute;left:178.20000000000005px;transform-origin:left center;top:1.6687499999999993px;line-height:16px;white-space:pre;font-family:'Liberation Sans',sans-serif;font-size:12.5px;font-weight:normal;color:#000;-webkit-text-stroke:0.18px;transform:scaleX(0.9072);">(200 48 83 224 254 127 0 0)</span></div><span style="position:absolute;left:325.2px;transform-origin:left center;top:649.66875px;line-height:16px;white-space:pre;font-family:'Liberation Sans',sans-serif;font-size:12.5px;font-weight:normal;color:#2ea4e8;transform:scaleX(0.9642);-webkit-text-stroke:0.1px #2ea4e8;">inst. var</span><svg style="left:398px;top:651px" width="14" height="14"><circle cx="7" cy="7" r="6.4" fill="#aed6f5" stroke="#86c0ec" stroke-width="1"/><path d="M9.2 5.5A2.7 2.5 0 1 0 9.2 8.9" fill="none" stroke="#3a3a3a" stroke-width="1.15"/></svg><span style="position:absolute;left:415.4px;transform-origin:left center;top:650.66875px;line-height:16px;white-space:pre;font-family:'Liberation Sans',sans-serif;font-size:12.5px;font-weight:normal;color:#000;-webkit-text-stroke:0.18px;transform:scaleX(0.9873);">callback</span><div style="position:absolute;left:548px;top:649px;width:248.5px;height:20px;overflow:hidden"><span style="position:absolute;left:20.600000000000023px;transform-origin:left center;top:1.6687499999999993px;line-height:16px;white-space:pre;font-family:'Liberation Sans',sans-serif;font-size:12.5px;font-weight:normal;color:#000;-webkit-text-stroke:0.18px;transform:scaleX(0.9270);">a TFCallback(@ 16r1163FF0B8)</span></div><span style="position:absolute;left:325.2px;transform-origin:left center;top:669.66875px;line-height:16px;white-space:pre;font-family:'Liberation Sans',sans-serif;font-size:12.5px;font-weight:normal;color:#2ea4e8;transform:scaleX(1.0627);-webkit-text-stroke:0.1px #2ea4e8;">implicit</span><svg style="left:398px;top:671px" width="14" height="14"><circle cx="7" cy="7" r="6.4" fill="#aed6f5" stroke="#86c0ec" stroke-width="1"/><path d="M9.2 5.5A2.7 2.5 0 1 0 9.2 8.9" fill="none" stroke="#3a3a3a" stroke-width="1.15"/></svg><span style="position:absolute;left:415.4px;transform-origin:left center;top:670.66875px;line-height:16px;white-space:pre;font-family:'Liberation Sans',sans-serif;font-size:12.5px;font-weight:normal;color:#000;-webkit-text-stroke:0.18px;transform:scaleX(0.9951);">stackTop</span><div style="position:absolute;left:548px;top:669px;width:248.5px;height:20px;overflow:hidden"><span style="position:absolute;left:20.600000000000023px;transform-origin:left center;top:1.6687499999999993px;line-height:16px;white-space:pre;font-family:'Liberation Sans',sans-serif;font-size:12.5px;font-weight:normal;color:#000;-webkit-text-stroke:0.18px;transform:scaleX(0.9740);">a TFCallbackInvocation</span><span style="position:absolute;left:148.0px;transform-origin:left center;top:1.6687499999999993px;line-height:16px;white-space:pre;font-family:'Liberation Sans',sans-serif;font-size:12.5px;font-weight:normal;color:#000;-webkit-text-stroke:0.18px;transform:scaleX(0.8778);">(@</span><span style="position:absolute;left:166.0px;transform-origin:left center;top:1.6687499999999993px;line-height:16px;white-space:pre;font-family:'Liberation Sans',sans-serif;font-size:12.5px;font-weight:normal;color:#000;-webkit-text-stroke:0.18px;transform:scaleX(0.8917);">16r7FFEE05330)</span></div><span style="position:absolute;left:325.2px;transform-origin:left center;top:689.66875px;line-height:16px;white-space:pre;font-family:'Liberation Sans',sans-serif;font-size:12.5px;font-weight:normal;color:#2ea4e8;transform:scaleX(1.0627);-webkit-text-stroke:0.1px #2ea4e8;">implicit</span><svg style="left:398px;top:691px" width="14" height="14"><circle cx="7" cy="7" r="6.4" fill="#aed6f5" stroke="#86c0ec" stroke-width="1"/><path d="M9.2 5.5A2.7 2.5 0 1 0 9.2 8.9" fill="none" stroke="#3a3a3a" stroke-width="1.15"/></svg><span style="position:absolute;left:415.4px;transform-origin:left center;top:690.66875px;line-height:16px;white-space:pre;font-family:'Liberation Sans',sans-serif;font-size:12.5px;font-weight:normal;color:#000;-webkit-text-stroke:0.18px;transform:scaleX(0.9963);">thisContext</span><div style="position:absolute;left:548px;top:689px;width:248.5px;height:20px;overflow:hidden"><span style="position:absolute;left:20.799999999999955px;transform-origin:left center;top:1.6687499999999993px;line-height:16px;white-space:pre;font-family:'Liberation Sans',sans-serif;font-size:12.5px;font-weight:normal;color:#000;-webkit-text-stroke:0.18px;transform:scaleX(0.9841);">TFCallbackInvocation&gt;&gt;returnExecution</span></div><div style="position:absolute;left:797px;top:589px;width:3px;height:186px;background:#cfcfcf;"></div><span style="position:absolute;left:801.7px;transform-origin:left center;top:551.96875px;line-height:16px;white-space:pre;font-family:'Liberation Sans',sans-serif;font-size:12.5px;font-weight:normal;color:#000;-webkit-text-stroke:0.18px;transform:scaleX(0.9748);">an UndefinedObject (nil)</span><div style="position:absolute;left:1263px;top:551.5px;width:24.5px;height:29px;background:#e6e6e6;border:1px solid #ececec;"></div><svg style="left:1270px;top:562px" width="9" height="9"><path d="M1.2 1.5l6.2 6M7.4 1.5l-6.2 6" stroke="#505050" stroke-width="1.4" fill="none"/></svg><div style="position:absolute;left:800px;top:589.5px;width:43.5px;height:23px;background:#afd5fa;"></div><div style="position:absolute;left:846px;top:589.5px;width:87.5px;height:22.5px;background:#e8e8e8;border:1px solid #cfcfcf;border-bottom:none;"></div><div style="position:absolute;left:936px;top:589.5px;width:48.5px;height:22.5px;background:#e8e8e8;border:1px solid #cfcfcf;border-bottom:none;"></div><span style="position:absolute;left:807.6px;transform-origin:left center;top:593.66875px;line-height:16px;white-space:pre;font-family:'Liberation Sans',sans-serif;font-size:12.5px;font-weight:normal;color:#000;-webkit-text-stroke:0.18px;transform:scaleX(0.9194);">Raw</span><span style="position:absolute;left:856px;transform-origin:left center;top:593.66875px;line-height:16px;white-space:pre;font-family:'Liberation Sans',sans-serif;font-size:12.5px;font-weight:normal;color:#000;-webkit-text-stroke:0.18px;transform:scaleX(0.9892);">Breakpoints</span><span style="position:absolute;left:946px;transform-origin:left center;top:593.66875px;line-height:16px;white-space:pre;font-family:'Liberation Sans',sans-serif;font-size:12.5px;font-weight:normal;color:#000;-webkit-text-stroke:0.18px;transform:scaleX(0.9390);">Meta</span><div style="position:absolute;left:800px;top:612.5px;width:490px;height:163.5px;background:#e6e6e6;"></div><div style="position:absolute;left:843.5px;top:611.8px;width:446.5px;height:1px;background:#c9c9c9;"></div><div style="position:absolute;left:803px;top:617px;width:483.5px;height:106px;background:#fff;"></div><div style="position:absolute;left:803px;top:617px;width:170px;height:20px;background:#f0f0f0;"></div><div style="position:absolute;left:975px;top:617px;width:311.5px;height:20px;background:#f0f0f0;"></div><svg style="left:807.5px;top:623.5px" width="5" height="7"><path d="M0 3L2.5 0L5 3zM0 4L2.5 7L5 4z" fill="#3f8fcf"/></svg><svg style="left:979.5px;top:623.5px" width="5" height="7"><path d="M0 3L2.5 0L5 3zM0 4L2.5 7L5 4z" fill="#3f8fcf"/></svg><span style="position:absolute;left:815.3px;transform-origin:left center;top:618.66875px;line-height:16px;white-space:pre;font-family:'Liberation Sans',sans-serif;font-size:12.5px;font-weight:normal;color:#000;-webkit-text-stroke:0.18px;transform:scaleX(0.9947);">Variable</span><span style="position:absolute;left:987.6px;transform-origin:left center;top:618.66875px;line-height:16px;white-space:pre;font-family:'Liberation Sans',sans-serif;font-size:12.5px;font-weight:normal;color:#000;-webkit-text-stroke:0.18px;transform:scaleX(0.9663);">Value</span><svg style="left:824.8px;top:639px" width="14" height="14"><circle cx="7" cy="7" r="6.4" fill="#aed6f5" stroke="#86c0ec" stroke-width="1"/><path d="M9.2 5.5A2.7 2.5 0 1 0 9.2 8.9" fill="none" stroke="#3a3a3a" stroke-width="1.15"/></svg><span style="position:absolute;left:842.7px;transform-origin:left center;top:638.66875px;line-height:16px;white-space:pre;font-family:'Liberation Sans',sans-serif;font-size:12.5px;font-weight:normal;color:#000;-webkit-text-stroke:0.18px;transform:scaleX(0.9716);">self</span><span style="position:absolute;left:976.8px;transform-origin:left center;top:638.66875px;line-height:16px;white-space:pre;font-family:'Liberation Sans',sans-serif;font-size:12.5px;font-weight:normal;color:#000;-webkit-text-stroke:0.18px;transform:scaleX(1.0547);">nil</span><div style="position:absolute;left:803px;top:729px;width:483.5px;height:43px;background:#fff;"></div><div style="position:absolute;left:803px;top:735px;width:27px;height:19px;background:#afd5fa;"></div><div style="position:absolute;left:831px;top:735px;width:455.5px;height:19px;background:#fafcfe;"></div><div style="position:absolute;left:830px;top:729px;width:1px;height:43px;background:#8c8c8c;"></div><span style="position:absolute;right:471px;transform-origin:right center;top:737.66875px;line-height:16px;white-space:pre;font-family:'Liberation Sans',sans-serif;font-size:12.5px;font-weight:normal;color:#2a2a2a;transform:scaleX(0.8917);-webkit-text-stroke:0;">1</span><span style="position:absolute;left:837px;transform-origin:left center;top:736.848px;line-height:18px;white-space:pre;font-family:'DejaVu Sans Mono','Liberation Mono',monospace;letter-spacing:0.576px;font-size:12px;font-weight:normal;color:#1f8c8c;">self</span><div style="position:absolute;left:783.5px;top:779px;width:28.5px;height:19.8px;background:#cbcbcb;"></div><div style="position:absolute;left:787px;top:782px;width:7.8px;height:13.8px;background:#d3d3d3;border:1px solid #bfbfbf;"></div><div style="position:absolute;left:801px;top:782px;width:7.9px;height:13.8px;background:#d3d3d3;border:1px solid #bfbfbf;"></div><div style="position:absolute;left:0px;top:807px;width:1298px;height:2px;background:#dedede;"></div><div style="position:absolute;left:0px;top:808.5px;width:1298px;height:3.5px;background:#e5e5e5;"></div><div style="position:absolute;left:620px;top:811px;width:128px;height:1px;background:#c6c6c6;"></div>
</body></html>
